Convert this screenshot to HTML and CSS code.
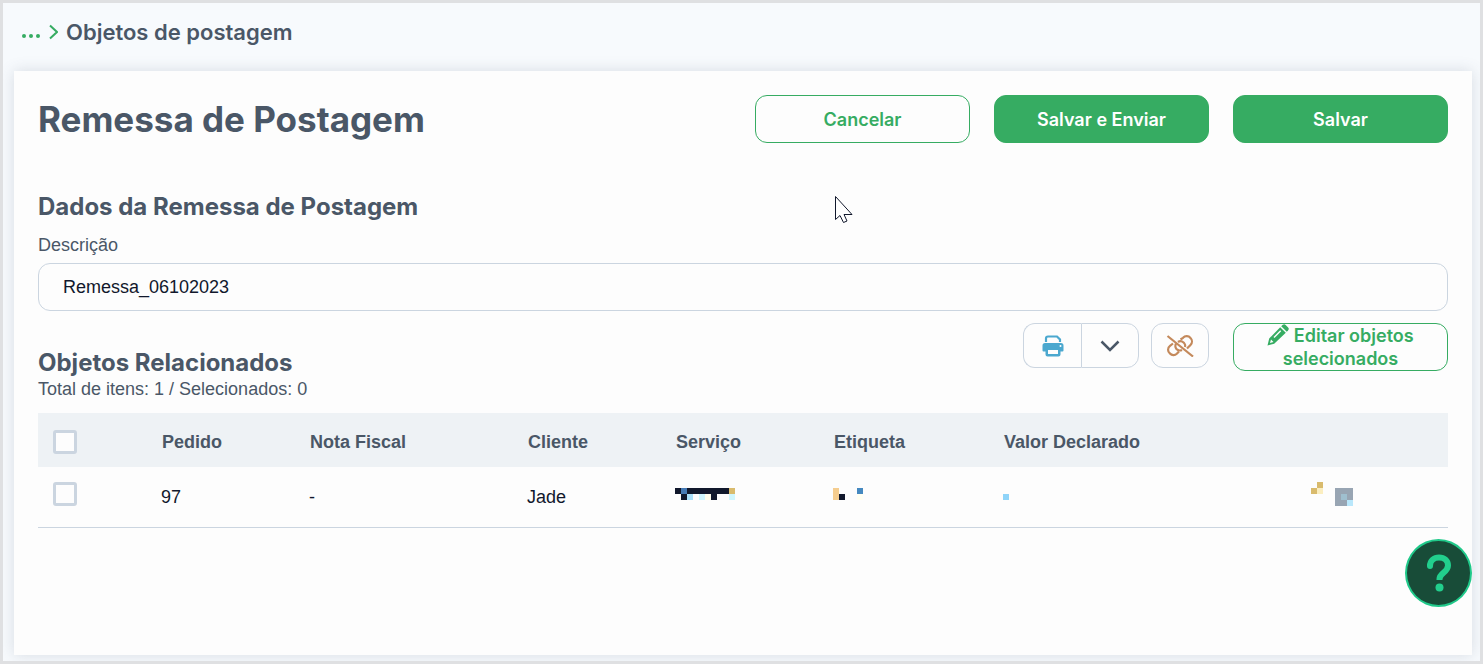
FILE: index.html
```html
<!DOCTYPE html>
<html lang="pt-BR">
<head>
    <meta charset="UTF-8">
    <meta name="viewport" content="width=device-width, initial-scale=1.0">
    <title>Remessa de Postagem</title>
    <link rel="stylesheet" href="styles.css">
</head>
<body>

    <nav class="breadcrumb">
        <a href="#" class="breadcrumb-more" aria-label="Voltar">
            <svg width="18" height="6" viewBox="0 0 18 6" fill="currentColor"><circle cx="2" cy="3" r="2"/><circle cx="9" cy="3" r="2"/><circle cx="16" cy="3" r="2"/></svg>
        </a>
        <svg class="breadcrumb-arrow" width="10" height="16" viewBox="0 0 10 16" fill="none" stroke="currentColor" stroke-width="2"><path d="M2 1.5 9 8 2 14.5"/></svg>
        <span class="breadcrumb-current">Objetos de postagem</span>
    </nav>

    <main class="card">
        <header class="card-header">
            <h1>Remessa de Postagem</h1>
            <div class="actions">
                <button type="button" class="btn btn-outline">Cancelar</button>
                <button type="button" class="btn btn-primary">Salvar e Enviar</button>
                <button type="submit" class="btn btn-primary">Salvar</button>
            </div>
        </header>

        <section class="form-section">
            <h2>Dados da Remessa de Postagem</h2>
            <label for="descricao">Descrição</label>
            <input type="text" id="descricao" class="text-input" value="Remessa_06102023">
        </section>

        <section>
            <div class="list-header">
                <div class="list-title">
                    <h2>Objetos Relacionados</h2>
                    <p>Total de itens: 1 / Selecionados: 0</p>
                </div>
                <div class="toolbar">
                    <div class="btn-group">
                        <button type="button" class="btn-icon print" aria-label="Imprimir">
                            <svg width="22" height="22" viewBox="0 0 22 22">
                                <path d="M4 7V3.5Q4 1.5 6 1.5H15L18 4.5V7" fill="none" stroke="currentColor" stroke-width="2.2"/>
                                <path d="M3 8H19Q21.5 8 21.5 10.5V15.5Q21.5 16.5 20.5 16.5H18.5V19.5Q18.5 21.5 16.5 21.5H5.5Q3.5 21.5 3.5 19.5V16.5H1.5Q.5 16.5 .5 15.5V10.5Q.5 8 3 8ZM6 15V19H16V15Z" fill="currentColor" fill-rule="evenodd"/>
                                <circle cx="18.5" cy="11" r="1" fill="#fff"/>
                            </svg>
                        </button>
                        <button type="button" class="btn-icon" aria-label="Mais opções">
                            <svg width="20" height="12" viewBox="0 0 20 12" fill="none" stroke="currentColor" stroke-width="2.5"><path d="M1.5 1.5 10 10 18.5 1.5"/></svg>
                        </button>
                    </div>
                    <button type="button" class="btn-icon unlink" aria-label="Desvincular">
                        <svg width="28" height="22" viewBox="0 0 28 22" fill="none" stroke="currentColor" stroke-width="2.2">
                            <path d="M7 8.5 4 10.8A4.8 4.8 0 0 0 4 18.5A4.8 4.8 0 0 0 10.8 18.8L13 16.5"/>
                            <path d="M10 8.5C8.8 11 9.5 13.5 11.5 14.8C12.8 15.6 14.5 15.7 16 15"/>
                            <path d="M14.5 4.5 17 2.8A5 5 0 0 1 24.5 3A5 5 0 0 1 24.500 10L21 13.5"/>
                            <path d="M12 7C14.5 5.3 18 6.500 19 9.500C19.300 10.500 19.200 11.300 19 12"/>
                            <path d="M1.5 1 27 21.500"/>
                        </svg>
                    </button>
                    <button type="button" class="btn btn-outline btn-edit">
                        <svg class="pencil" width="22" height="22" viewBox="0 0 22 22" fill="currentColor"><path d="M13.2 3.2 18.8 8.8 7.2 19.8 .5 21.5 2.2 14.5ZM4 15.5 3 19 6.5 18ZM13.2 6.2 6.5 13 7.5 14 14.2 7.2Z" fill-rule="evenodd"/><path d="M14.2 2.2 15.8 .8Q17.2-.4 18.600 .9L21.100 3.400Q22.400 4.800 21.200 6.200L19.800 7.800Z"/></svg>
                        Editar objetos selecionados
                    </button>
                </div>
            </div>

            <table class="objects">
                <colgroup>
                    <col class="col-check">
                    <col class="col-short">
                    <col class="col-invoice">
                    <col class="col-short">
                    <col class="col-service">
                    <col class="col-tag">
                    <col class="col-value">
                    <col>
                </colgroup>
                <thead>
                    <tr>
                        <th><input type="checkbox" class="check" aria-label="Selecionar todos"></th>
                        <th>Pedido</th>
                        <th>Nota Fiscal</th>
                        <th>Cliente</th>
                        <th>Serviço</th>
                        <th>Etiqueta</th>
                        <th>Valor Declarado</th>
                        <th></th>
                    </tr>
                </thead>
                <tbody>
                    <tr>
                        <td><input type="checkbox" class="check" aria-label="Selecionar pedido 97"></td>
                        <td>97</td>
                        <td>-</td>
                        <td>Jade</td>
                        <!-- masked values -->
                        <td>
                            <svg class="mask" width="60" height="24" viewBox="0 0 10 4" shape-rendering="crispEdges">
                                <path d="M0 1H9V2H0ZM1 2H2V3H1ZM6 2H7V3H6Z" fill="#11182c"/>
                                <path d="M1 1H2V2H1Z" fill="#467ab4"/>
                                <path d="M9 1H10V2H9Z" fill="#d9bb6d"/>
                                <path d="M2 2H3V3H2Z" fill="#a9e0fa"/>
                                <path d="M4 2H5V3H4ZM9 2H10V3H9Z" fill="#cff6fe"/>
                                <path d="M5 2H6V3H5Z" fill="#fffeed"/>
                            </svg>
                        </td>
                        <td>
                            <svg class="mask" width="30" height="24" viewBox="0 0 5 4" shape-rendering="crispEdges">
                                <path d="M0 1H1V3H0Z" fill="#f5cd8f"/>
                                <path d="M1 2H2V3H1Z" fill="#11182c"/>
                                <path d="M4 1H5V2H4Z" fill="#4589c0"/>
                                <path d="M4 2H5V3H4Z" fill="#fffff2"/>
                            </svg>
                        </td>
                        <td>
                            <svg class="mask" width="12" height="24" viewBox="0 0 2 4" shape-rendering="crispEdges">
                                <path d="M0 2H1V3H0Z" fill="#8fd4f9"/>
                            </svg>
                        </td>
                        <td>
                            <svg class="mask" width="42" height="24" viewBox="0 0 7 4" shape-rendering="crispEdges">
                                <path d="M1 0H2V1H1ZM0 1H1V2H0Z" fill="#d9bb6d"/>
                                <path d="M1 1H2V2H1Z" fill="#fbeec0"/>
                                <path d="M4 1H7V4H4Z" fill="#98a5b3"/>
                                <path d="M5 2H6V3H5Z" fill="#9fbfcf"/>
                                <path d="M6 3H7V4H6Z" fill="#b9e7fb"/>
                            </svg>
                        </td>
                    </tr>
                </tbody>
            </table>
        </section>
    </main>

    <button type="button" class="help-button" aria-label="Ajuda">
        <svg width="26" height="38" viewBox="0 0 26 38">
            <path d="M4 12C4 6.5 8 3.5 13 3.5C18.5 3.5 22 7 22 11.5C22 18.5 13.5 18.5 13.5 25V26" fill="none" stroke="currentColor" stroke-width="6"/>
            <circle cx="4" cy="12" r="3" fill="currentColor"/>
            <circle cx="13.5" cy="33.5" r="4" fill="currentColor"/>
        </svg>
    </button>

    <svg class="cursor" width="20" height="30" viewBox="0 0 20 30" fill="#fff" stroke="#11182c"><path d="M1.5 1.5V24.5L6 20.5 9.5 27.5 13 26 10 19.5H18Z"/></svg>

</body>
</html>
```
FILE: styles.css
```css
* {
    box-sizing: border-box;
}

body {
    margin: 0;
    min-height: 100vh;
    display: flex;
    flex-direction: column;
    padding: 0 8px 6px 11px;
    border: 3px solid #dfe0e2;
    background-color: #f7fafd;
    color: #4a5767;
    font-family: "Liberation Sans", Arial, sans-serif;
    font-size: 18px;
    line-height: 24px;
}

h1, h2, p {
    margin: 0;
}

h1, h2, .breadcrumb, .btn {
    font-family: Gilroy, Inter, sans-serif;
}

h1 {
    font-size: 35px;
    font-weight: 700;
    line-height: 48px;
}

h2 {
    font-size: 24px;
    font-weight: 700;
    line-height: 32px;
}

button, input {
    font-family: inherit;
    font-size: 18px;
}

button {
    cursor: pointer;
}

/* Breadcrumb */
.breadcrumb {
    display: flex;
    align-items: center;
    gap: 8px;
    height: 68px;
    padding: 0 8px 10px;
    font-size: 22px;
    font-weight: 600;
}

.breadcrumb-more,
.breadcrumb-arrow {
    color: #36ac62;
}

.breadcrumb-more {
    display: flex;
    padding-top: 8px;
}

/* Main card */
.card {
    flex-grow: 1;
    padding: 24px;
    background-color: #fdfdfd;
    box-shadow: 0 0 14px rgba(74, 85, 104, 0.18);
}

.card-header {
    display: flex;
    justify-content: space-between;
    align-items: center;
    margin-bottom: 48px;
}

.actions {
    display: flex;
    gap: 24px;
}

.btn {
    width: 215px;
    height: 48px;
    padding: 0 16px;
    border: 1px solid #36ac62;
    border-radius: 12px;
    font-size: 18px;
    font-weight: 600;
    line-height: 23px;
}

.btn-primary {
    background-color: #36ac62;
    color: #fff;
}

.btn-outline {
    background-color: transparent;
    color: #36ac62;
}

/* Form */
.form-section label {
    display: block;
    padding: 10px 0 6px;
}

.text-input {
    display: block;
    width: 100%;
    height: 48px;
    padding: 0 24px;
    border: 1px solid #cbd5e0;
    border-radius: 12px;
    background-color: transparent;
    color: #11182c;
}

/* List header and toolbar */
.list-header {
    display: flex;
    justify-content: space-between;
    padding: 12px 0;
}

.list-title {
    padding-top: 24px;
}

.list-title p {
    padding-bottom: 2px;
    line-height: 20px;
}

.toolbar {
    display: flex;
    align-items: flex-start;
    gap: 12px;
}

.btn-group {
    display: flex;
}

.btn-icon {
    display: flex;
    align-items: center;
    justify-content: center;
    width: 58px;
    height: 45px;
    padding: 0;
    border: 1px solid #cbd5e0;
    border-radius: 12px;
    background-color: transparent;
    color: #4a5767;
}

.btn-group .btn-icon:first-child {
    border-right: 0;
    border-radius: 12px 0 0 12px;
}

.btn-group .btn-icon:last-child {
    border-radius: 0 12px 12px 0;
}

.btn-icon.print {
    color: #4ba8cf;
}

.btn-icon.unlink {
    color: #c4895b;
}

.btn-edit {
    margin-left: 12px;
}

.pencil {
    margin-top: -4px;
    vertical-align: -4px;
}

/* Table */
.objects {
    width: 100%;
    table-layout: fixed;
    border-collapse: collapse;
    text-align: left;
}

.objects th {
    height: 54px;
    padding: 4px 0 0 15px;
    background-color: #eef2f5;
}

.objects td {
    height: 60px;
    padding: 0 0 0 14px;
    border-bottom: 1px solid #cbd5e0;
    color: #11182c;
}

.objects td:first-child {
    padding: 0 0 6px 15px;
}

.col-check {
    width: 109px;
}

.col-short {
    width: 148px;
}

.col-invoice {
    width: 218px;
}

.col-service {
    width: 158px;
}

.col-tag {
    width: 170px;
}

.col-value {
    width: 308px;
}

.check {
    appearance: none;
    display: block;
    width: 24px;
    height: 24px;
    margin: 0;
    border: 3px solid #cbd5e0;
    border-radius: 3px;
    background-color: #fdfdfd;
}

.mask {
    display: block;
    margin-bottom: 6px;
}

/* Floating help button */
.help-button {
    position: fixed;
    right: 11px;
    bottom: 57px;
    display: flex;
    align-items: center;
    justify-content: center;
    width: 67px;
    height: 68px;
    padding: 0;
    border: 2px solid #20c98a;
    border-radius: 50%;
    background-color: #184c38;
    color: #22cf8d;
}

.cursor {
    position: absolute;
    left: 834px;
    top: 195px;
    pointer-events: none;
}
```
